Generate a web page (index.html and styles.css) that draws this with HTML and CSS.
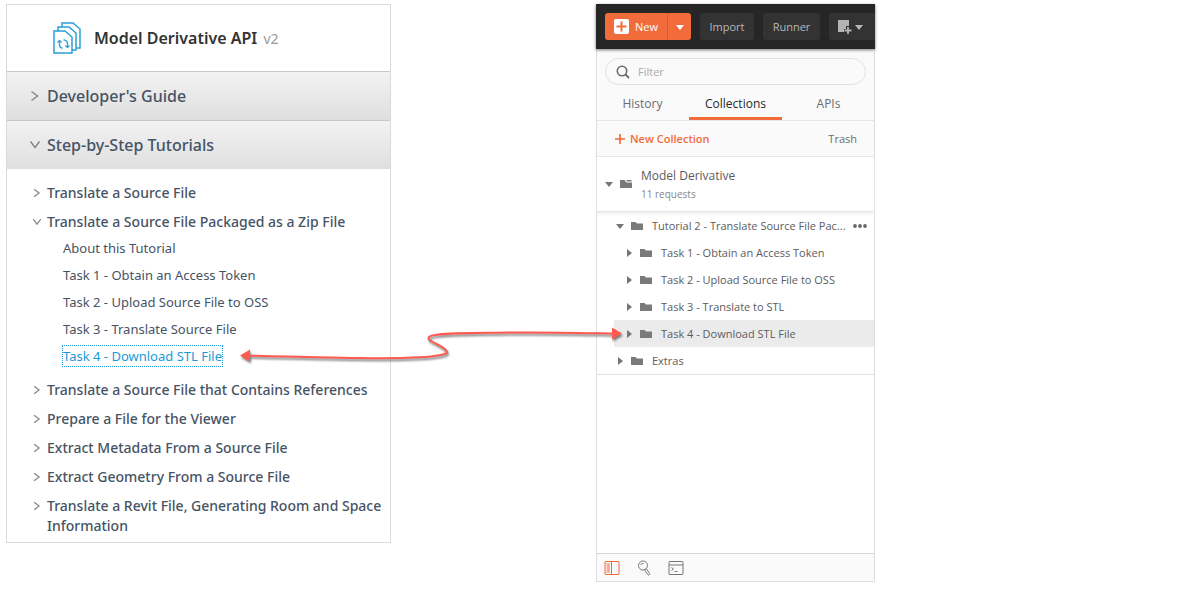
FILE: index.html
```html
<!DOCTYPE html>
<html lang="en">
<head>
<meta charset="utf-8">
<title>Model Derivative API</title>
<link rel="stylesheet" href="styles.css">
</head>
<body>
<svg class="sprite" aria-hidden="true">
  <symbol id="chevron" viewBox="0 0 10 12"><path d="M1.5 1.5 7.500 6 1.500 10.500" fill="none" stroke="currentColor" stroke-width="1.500"/></symbol>
  <symbol id="caret" viewBox="0 0 8 8"><path d="M0 2h8L4 7z" fill="currentColor"/></symbol>
  <symbol id="folder" viewBox="0 0 12 10"><path d="M0 1h4.500l1.500 1.500h6V9H0z" fill="currentColor"/></symbol>
  <symbol id="folder-open" viewBox="0 0 12 10"><path d="M0 1h4.500l2 2.500H12V9H0z" fill="currentColor"/><path d="M6 1h5.500v1.500H7.200z" fill="currentColor"/></symbol>
</svg>
<main class="stage">
  <nav class="docs" aria-label="Documentation">
    <header class="docs-header">
      <svg class="docs-logo" viewBox="0 0 28 32" aria-hidden="true">
        <g fill="none" stroke="#2a9fd8" stroke-width="1.500">
          <path d="M9 5V1h11l7 6v19h-3.500"/>
          <path d="M5 9V5h11l7 6v17h-4"/>
          <path d="M1 9h11l7 6v16H1z"/>
          <path d="M6.500 18.500v3.500a4 4 0 0 0 3 4.300M10.500 17.800a4 4 0 0 1 4 4.200v3.500" stroke-width="1.300"/>
          <path d="M4.500 20.500l2-2 2.200 2M12.300 23.500l2.200 2 2-2" stroke-width="1.200"/>
        </g>
      </svg>
      <h1 class="docs-title">Model Derivative API <span class="version">v2</span></h1>
    </header>
    <button class="section" type="button"><svg class="chev"><use href="#chevron"/></svg>Developer's Guide</button>
    <button class="section" type="button"><svg class="chev open"><use href="#chevron"/></svg>Step-by-Step Tutorials</button>
    <ul class="topics">
      <li><a class="topic" href="#t1"><svg class="chev"><use href="#chevron"/></svg>Translate a Source File</a></li>
      <li><a class="topic" href="#t2"><svg class="chev open"><use href="#chevron"/></svg>Translate a Source File Packaged as a Zip File</a>
        <ul class="tasks">
          <li><a href="#about">About this Tutorial</a></li>
          <li><a href="#task1">Task 1 - Obtain an Access Token</a></li>
          <li><a href="#task2">Task 2 - Upload Source File to OSS</a></li>
          <li><a href="#task3">Task 3 - Translate Source File</a></li>
          <li><a class="current" href="#task4">Task 4 - Download STL File</a></li>
        </ul>
      </li>
      <li><a class="topic" href="#t3"><svg class="chev"><use href="#chevron"/></svg>Translate a Source File that Contains References</a></li>
      <li><a class="topic" href="#t4"><svg class="chev"><use href="#chevron"/></svg>Prepare a File for the Viewer</a></li>
      <li><a class="topic" href="#t5"><svg class="chev"><use href="#chevron"/></svg>Extract Metadata From a Source File</a></li>
      <li><a class="topic" href="#t6"><svg class="chev"><use href="#chevron"/></svg>Extract Geometry From a Source File</a></li>
      <li><a class="topic" href="#t7"><svg class="chev"><use href="#chevron"/></svg>Translate a Revit File, Generating Room and Space Information</a></li>
    </ul>
  </nav>

  <section class="client" aria-label="Collections">
    <div class="toolbar">
      <div class="split">
        <button class="new" type="button"><svg class="plus-box" viewBox="0 0 15 15"><rect width="15" height="15" rx="2" fill="#fff"/><path d="M7.500 2.500v10M2.500 7.500h10" stroke="#f26b3a" stroke-width="2"/></svg>New</button>
        <button class="more" type="button" aria-label="More new options"><svg class="caret"><use href="#caret"/></svg></button>
      </div>
      <button class="tool" type="button">Import</button>
      <button class="tool" type="button">Runner</button>
      <button class="tool window" type="button" aria-label="New window"><svg class="window-icon" viewBox="0 0 16 16"><path d="M1 1h11v6H9v3H7v3H1z" fill="#b4b4b4"/><path d="M11 8v7M7.500 11.500h7" stroke="#b4b4b4" stroke-width="1.800"/></svg><svg class="caret"><use href="#caret"/></svg></button>
    </div>
    <div class="finder">
      <label class="search"><svg viewBox="0 0 14 14" aria-hidden="true"><circle cx="6" cy="6" r="4.700" fill="none" stroke="#6b6b6b" stroke-width="1.600"/><path d="m9.500 9.500 3.500 3.500" stroke="#6b6b6b" stroke-width="1.800"/></svg><input type="text" placeholder="Filter" aria-label="Filter"></label>
      <div class="tabs" role="tablist">
        <button type="button" role="tab">History</button>
        <button class="active" type="button" role="tab" aria-selected="true">Collections</button>
        <button type="button" role="tab">APIs</button>
      </div>
    </div>
    <div class="actions">
      <button class="create" type="button"><svg viewBox="0 0 12 12" aria-hidden="true"><path d="M6 1v10M1 6h10" stroke="currentColor" stroke-width="1.700"/></svg>New Collection</button>
      <button class="trash" type="button">Trash</button>
    </div>
    <div class="collection">
      <svg class="caret"><use href="#caret"/></svg><svg class="folder"><use href="#folder-open"/></svg>
      <div><div class="name">Model Derivative</div><div class="count">11 requests</div></div>
    </div>
    <ul class="tree">
      <li class="row"><svg class="caret"><use href="#caret"/></svg><svg class="folder"><use href="#folder"/></svg><span class="label">Tutorial 2 - Translate Source File Pac...</span><button class="dots" type="button" aria-label="Options"><svg viewBox="0 0 14 4"><g fill="#666"><circle cx="2" cy="2" r="1.900"/><circle cx="7" cy="2" r="1.900"/><circle cx="12" cy="2" r="1.900"/></g></svg></button></li>
      <li class="row nested"><svg class="caret closed"><use href="#caret"/></svg><svg class="folder"><use href="#folder"/></svg><span class="label">Task 1 - Obtain an Access Token</span></li>
      <li class="row nested"><svg class="caret closed"><use href="#caret"/></svg><svg class="folder"><use href="#folder"/></svg><span class="label">Task 2 - Upload Source File to OSS</span></li>
      <li class="row nested"><svg class="caret closed"><use href="#caret"/></svg><svg class="folder"><use href="#folder"/></svg><span class="label">Task 3 - Translate to STL</span></li>
      <li class="row nested selected"><svg class="caret closed"><use href="#caret"/></svg><svg class="folder"><use href="#folder"/></svg><span class="label">Task 4 - Download STL File</span></li>
      <li class="row"><svg class="caret closed"><use href="#caret"/></svg><svg class="folder"><use href="#folder"/></svg><span class="label">Extras</span></li>
    </ul>
    <footer class="status">
      <button type="button" aria-label="Toggle sidebar"><svg viewBox="0 0 16 16" fill="none" stroke="#f26b3a"><rect x="1" y="1.500" width="14" height="13" rx=".5"/><path d="M7.500 1.500v13M2.500 4h3.500M2.500 6h3.500M2.500 8h3.500M2.500 10h3.500M2.500 12h3.500"/></svg></button>
      <button type="button" aria-label="Find"><svg viewBox="0 0 16 16" fill="none" stroke="#777"><circle cx="7" cy="5.500" r="4.500"/><path d="M4.500 5Q5.500 3 7.500 3.500M8.500 9.800l1.600-.8M8.700 10.200l3 4.300q.8.800 1.500.3t.2-1.500L10.600 9"/></svg></button>
      <button type="button" aria-label="Console"><svg viewBox="0 0 16 16" fill="none" stroke="#777"><rect x="1" y="1.500" width="14" height="13" rx=".5"/><path d="M1 5h14M3.500 7.500l2 1.500-2 1.500M6.500 11.500h3"/></svg></button>
    </footer>
  </section>

  <svg class="link-arrow" viewBox="0 0 400 50" aria-hidden="true">
    <path d="M9 26.500C50 28 80 28 120 29S208 28 207 23C206 17 185 12 189 8C193 3 240 4 270 3.500S345 4 375 4.500" fill="none" stroke="#ff5a4f" stroke-width="2"/>
    <path d="M0 26.500 10 20.500v12zM382 4.500 372-1.500v12z" fill="#ff5a4f"/>
  </svg>
</main>
</body>
</html>
```
FILE: styles.css
```css
* { box-sizing: border-box; }
body { margin: 0; background: #fff; font-family: "Open Sans", sans-serif; }
button { border: 0; padding: 0; background: none; font: inherit; color: inherit; cursor: pointer; }
a { color: inherit; text-decoration: none; }
ul { list-style: none; margin: 0; padding: 0; }
svg { flex: none; display: block; }
.sprite { position: absolute; width: 0; height: 0; }

.stage { position: relative; display: flex; align-items: flex-start; gap: 205px; padding: 4px 6px; }

.docs { flex: 0 0 385px; border: 1px solid #d8dadb; color: #465365; font: 14px/20px "Noto Sans", sans-serif; }
.docs-header { display: flex; align-items: center; gap: 13px; height: 66px; padding-left: 46px; }
.docs-logo { width: 28px; height: 32px; }
.docs-title { margin: 0; color: #333; font-size: 16px; font-weight: 600; }
.version { margin-left: 2px; color: #999; font-size: 14px; font-weight: 400; }
.section { display: flex; align-items: center; gap: 7px; width: 100%; height: 49px; padding-left: 23px; border-top: 1px solid #c5c9c9; background: linear-gradient(#f2f2f2, #dfdfdf); font-size: 16px; font-weight: 500; }
.chev { width: 10px; height: 12px; color: #888; }
.open { transform: rotate(90deg); }
.topics { padding: 14px 8px 6px 25px; }
.topics > li + li { margin-top: 9px; }
.topic { display: flex; gap: 5px; font-weight: 500; }
.topic .chev { height: 10px; margin-top: 5px; }
.tasks { padding: 2px 0 2px 31px; }
.tasks li { display: flex; align-items: center; height: 27px; font-size: 13px; }
.current { color: #1a9ad9; outline: 1px dotted #1a9ad9; }

.client { flex: 0 0 279px; min-width: 0; display: flex; flex-direction: column; min-height: 578px; border: 1px solid #ddd; border-top: 0; color: #5c5c5c; font-size: 11px; line-height: 18px; }
.toolbar { position: relative; display: flex; gap: 9px; height: 45px; margin: 0 -1px; padding: 9px 0 9px 9px; background: #262626; color: #b8b8b8; box-shadow: 0 1px 3px #777; }
.split { display: flex; flex: none; border-radius: 3px; background: #f26b3a; color: #fff; }
.new { display: flex; align-items: center; gap: 6px; width: 62px; padding-left: 9px; }
.plus-box { width: 15px; height: 15px; }
.more { display: grid; place-items: center; width: 24px; border-left: 1px solid #d9592b; }
.tool { flex: none; width: 54px; border-radius: 3px; background: #333; }
.tool + .tool { width: 57px; }
.tool.window { display: flex; flex: 1; align-items: center; gap: 2px; padding-left: 8px; border-radius: 3px 0 0 3px; }
.window-icon { width: 16px; height: 16px; }
.caret { width: 8px; height: 8px; }
.closed { transform: rotate(-90deg); }
.finder { padding: 9px 8px 0; background: #fafafa; border-bottom: 1px solid #e5e5e5; }
.search { display: flex; align-items: center; gap: 8px; height: 27px; padding: 0 10px; border: 1px solid #e2e2e2; border-radius: 14px; }
.search svg { width: 14px; height: 14px; }
.search input { flex: 1; min-width: 0; padding: 0; border: 0; outline: 0; background: none; font: inherit; }
.search input::placeholder { color: #aaa; }
.tabs { display: grid; grid-template-columns: 75fr 93fr 75fr; gap: 9px; height: 35px; font-size: 12px; color: #6b6b6b; }
.tabs button { padding-top: 6px; border-bottom: 3px solid transparent; }
.tabs .active { color: #282828; border-color: #f26b3a; }
.actions { display: flex; align-items: center; justify-content: space-between; height: 36px; padding: 0 17px; background: #fafafa; border-bottom: 1px solid #e5e5e5; }
.create { display: flex; align-items: center; gap: 4px; color: #f26b3a; font-weight: 600; }
.create svg { width: 12px; height: 12px; }
.trash { color: #6b6b6b; }
.collection { display: flex; align-items: center; height: 55px; padding-left: 8px; border-bottom: 1px solid #e5e5e5; box-shadow: 0 2px 3px #eee; }
.folder { width: 12px; height: 10px; margin: 0 9px 0 7px; color: #7a7a7a; }
.collection .caret, .tree .caret { color: #757575; }
.name { padding-top: 2px; font-size: 12px; line-height: 18px; }
.count { color: #888; font-size: 10px; }
.tree { border-bottom: 1px solid #e2e2e2; }
.row { display: flex; align-items: center; height: 27px; margin-left: 17px; padding-left: 2px; }
.nested { padding-left: 11px; }
.selected { background: #ebebeb; }
.label { white-space: nowrap; }
.dots { flex: none; margin: 0 7px 0 auto; }
.dots svg { width: 14px; height: 4px; }
.status { display: flex; align-items: center; gap: 16px; height: 28px; margin-top: auto; padding-left: 7px; border-top: 1px solid #d5d5d5; background: #fafafa; }
.status svg { width: 16px; height: 16px; }

.link-arrow { position: absolute; left: 240px; top: 329px; width: 400px; height: 50px; overflow: visible; filter: drop-shadow(1px 2px 1px #777); pointer-events: none; }
```
